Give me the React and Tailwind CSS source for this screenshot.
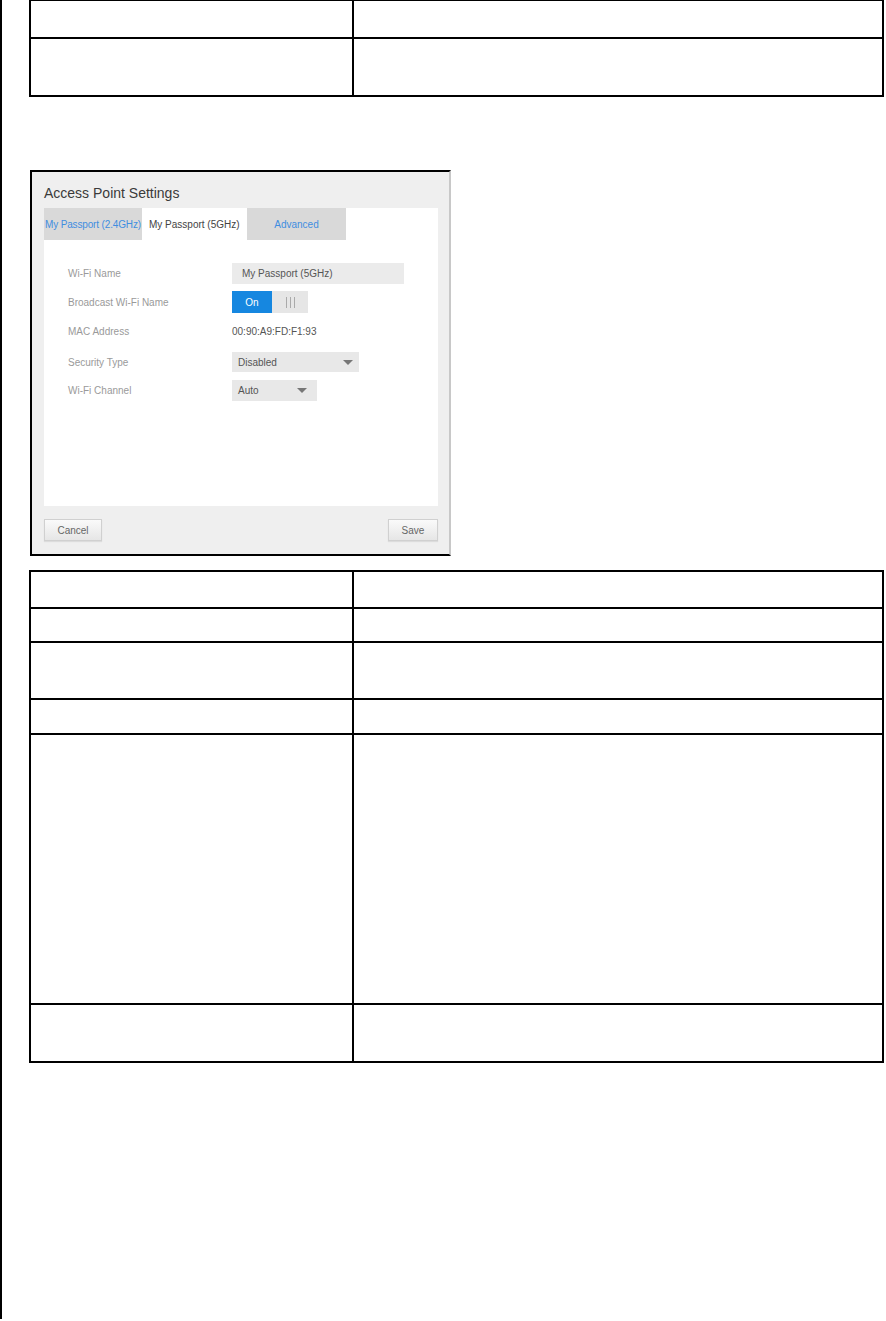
const font = { fontFamily: '"Liberation Sans", Arial, sans-serif' }

const topRows = [36, 56]
const bottomRows = [35, 32, 55, 33, 268, 56]

function EmptyTable({ rows, className = '' }) {
  return (
    <div className={`ml-[27px] w-[855px] border-2 border-black ${className}`}>
      {rows.map((height, index) => (
        <div key={index} className={`flex ${index > 0 ? 'border-t-2 border-black' : ''}`}>
          <div className="w-[323px] shrink-0 border-r-2 border-black" style={{ height }} />
          <div className="flex-1" />
        </div>
      ))}
    </div>
  )
}

function Caret() {
  return <span className="h-0 w-0 border-x-[5px] border-t-[5px] border-x-transparent border-t-[#777]" />
}

function SettingRow({ label, className = '', children }) {
  return (
    <div className={`flex items-center ${className}`}>
      <span className="w-[164px] shrink-0 text-[10px] text-[#9a9a9a]">{label}</span>
      {children}
    </div>
  )
}

function AccessPointShot() {
  return (
    <div
      className="ml-[28px] mt-[73px] flex h-[386px] w-[421px] flex-col border-2 border-black border-r-[#c8c8c8] bg-[#efefef] px-[12px] pr-[11px]"
      style={font}
    >
      <div className="h-[36px] pt-[13px] text-[14px] leading-4 text-[#3a3a3a]">Access Point Settings</div>

      <div className="flex h-[298px] flex-col bg-white">
        <div className="flex h-[32px] whitespace-nowrap text-[10px]">
          <div className="flex w-[98px] items-start overflow-hidden bg-[#d9d9d9] pl-[1px] pt-[9px] tracking-[-0.15px] text-[#3f8ee0]">
            My Passport (2.4GHz)
          </div>
          <div className="flex w-[105px] items-start pl-[7px] pt-[9px] text-[#444]">My Passport (5GHz)</div>
          <div className="flex w-[99px] items-start justify-center bg-[#d9d9d9] pt-[9px] text-[#3f8ee0]">Advanced</div>
        </div>

        <div className="pl-[24px]">
          <SettingRow label="Wi-Fi Name" className="mt-[23px] h-[21px]">
            <div className="flex h-[21px] w-[172px] items-center bg-[#ebebeb] pl-[10px] text-[10px] text-[#555]">
              My Passport (5GHz)
            </div>
          </SettingRow>
          <SettingRow label="Broadcast Wi-Fi Name" className="mt-[7px] h-[22px]">
            <div className="flex h-[22px]">
              <div className="flex w-[40px] items-center justify-center bg-[#1687e0] text-[10px] text-white">On</div>
              <div className="flex w-[36px] items-center justify-center gap-[3px] bg-[#e6e6e6]">
                <span className="h-[11px] w-px bg-[#aaa]" />
                <span className="h-[11px] w-px bg-[#aaa]" />
                <span className="h-[11px] w-px bg-[#aaa]" />
              </div>
            </div>
          </SettingRow>
          <SettingRow label="MAC Address" className="mt-[8px] h-[21px]">
            <span className="text-[10px] text-[#555]">00:90:A9:FD:F1:93</span>
          </SettingRow>
          <SettingRow label="Security Type" className="mt-[10px] h-[20px]">
            <div className="flex h-[20px] w-[127px] items-center justify-between bg-[#e8e8e8] pl-[6px] pr-[6px] text-[10px] text-[#555]">
              Disabled
              <Caret />
            </div>
          </SettingRow>
          <SettingRow label="Wi-Fi Channel" className="mt-[8px] h-[21px]">
            <div className="flex h-[21px] w-[85px] items-center justify-between bg-[#e8e8e8] pl-[6px] pr-[10px] text-[10px] text-[#555]">
              Auto
              <Caret />
            </div>
          </SettingRow>
        </div>
      </div>

      <div className="mt-[13px] flex justify-between">
        <button
          type="button"
          className="h-[22px] w-[58px] border border-[#d0d0d0] bg-gradient-to-b from-[#fafafa] to-[#e6e6e6] text-[10px] text-[#666] shadow-[0_1px_1px_rgba(0,0,0,0.08)]"
        >
          Cancel
        </button>
        <button
          type="button"
          className="h-[22px] w-[50px] border border-[#d0d0d0] bg-gradient-to-b from-[#fafafa] to-[#e6e6e6] text-[10px] text-[#666] shadow-[0_1px_1px_rgba(0,0,0,0.08)]"
        >
          Save
        </button>
      </div>
    </div>
  )
}

export default function App() {
  return (
    <div className="min-h-[1321px] bg-white">
      <div className="min-h-[1320px] border-l-2 border-black">
        <EmptyTable rows={topRows} className="-mt-px" />
        <AccessPointShot />
        <EmptyTable rows={bottomRows} className="mt-[14px]" />
      </div>
    </div>
  )
}
